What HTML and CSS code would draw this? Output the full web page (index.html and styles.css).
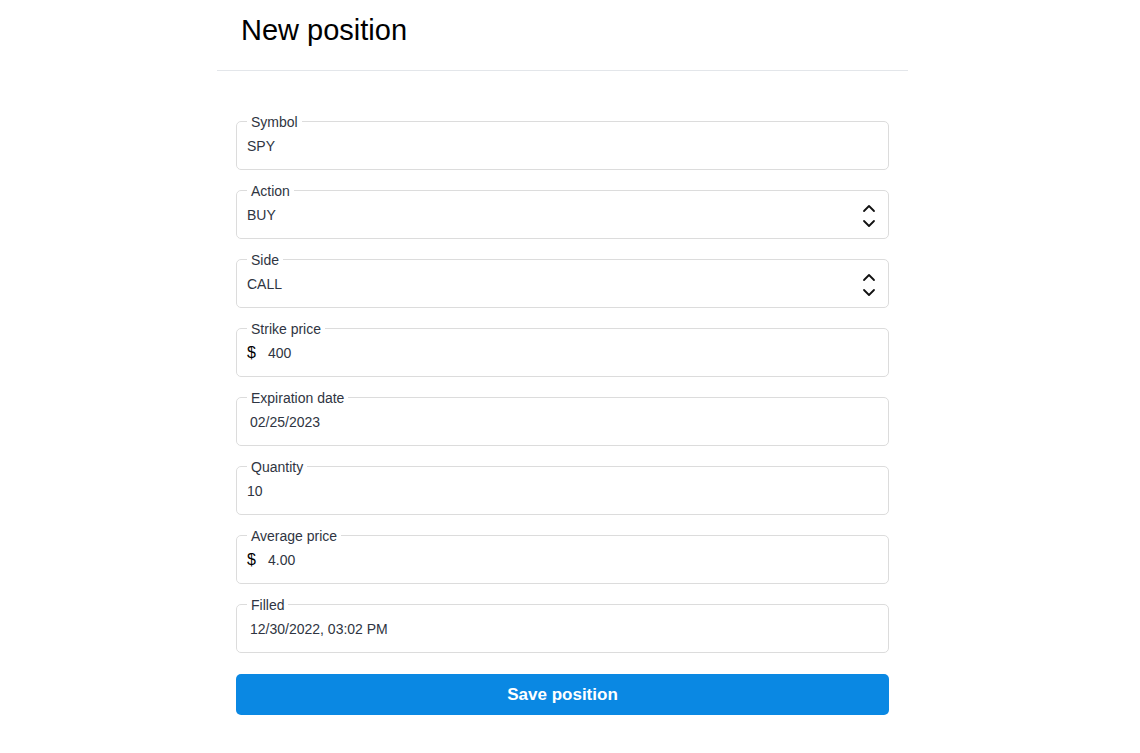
FILE: index.html
```html
<!DOCTYPE html>
<html lang="en">
<head>
<meta charset="utf-8">
<title>New position</title>
<link rel="stylesheet" href="styles.css">
</head>
<body>
<div class="page">
  <header class="header">
    <h1 class="title">New position</h1>
  </header>
  <form class="form">
    <fieldset class="field">
      <legend class="label">Symbol</legend>
      <div class="control"><span class="value">SPY</span></div>
    </fieldset>
    <fieldset class="field">
      <legend class="label">Action</legend>
      <div class="control select"><span class="value">BUY</span>
        <svg class="chev" width="14" height="26" viewBox="0 0 14 26"><path d="M2 8 L7 3 L12 8" fill="none" stroke="#111" stroke-width="1.8" stroke-linecap="round" stroke-linejoin="round"/><path d="M2 18 L7 23 L12 18" fill="none" stroke="#111" stroke-width="1.8" stroke-linecap="round" stroke-linejoin="round"/></svg>
      </div>
    </fieldset>
    <fieldset class="field">
      <legend class="label">Side</legend>
      <div class="control select"><span class="value">CALL</span>
        <svg class="chev" width="14" height="26" viewBox="0 0 14 26"><path d="M2 8 L7 3 L12 8" fill="none" stroke="#111" stroke-width="1.8" stroke-linecap="round" stroke-linejoin="round"/><path d="M2 18 L7 23 L12 18" fill="none" stroke="#111" stroke-width="1.8" stroke-linecap="round" stroke-linejoin="round"/></svg>
      </div>
    </fieldset>
    <fieldset class="field">
      <legend class="label">Strike price</legend>
      <div class="control"><span class="prefix">$</span><span class="value">400</span></div>
    </fieldset>
    <fieldset class="field">
      <legend class="label">Expiration date</legend>
      <div class="control"><span class="value date">02/25/2023</span></div>
    </fieldset>
    <fieldset class="field">
      <legend class="label">Quantity</legend>
      <div class="control"><span class="value">10</span></div>
    </fieldset>
    <fieldset class="field">
      <legend class="label">Average price</legend>
      <div class="control"><span class="prefix">$</span><span class="value">4.00</span></div>
    </fieldset>
    <fieldset class="field">
      <legend class="label">Filled</legend>
      <div class="control"><span class="value date">12/30/2022, 03:02 PM</span></div>
    </fieldset>
    <button type="button" class="save">Save position</button>
  </form>
</div>
</body>
</html>
```
FILE: styles.css
```css
* { box-sizing: border-box; }
html, body {
  margin: 0;
  padding: 0;
  background: #fff;
}
body {
  font-family: "Liberation Sans", Arial, sans-serif;
  color: #2f3542;
}
.page {
  width: 691px;
  margin-left: 217px;
}
.header {
  height: 71px;
  border-bottom: 1px solid #e3e6ea;
  padding-left: 24px;
}
.title {
  margin: 0;
  padding-top: 12px;
  font-size: 29px;
  line-height: 36px;
  font-weight: 400;
  color: #000;
}
.form {
  display: flex;
  flex-direction: column;
  gap: 12px;
  padding: 42px 19px 0;
}
.field {
  margin: 0;
  border: 1px solid #dcdcdc;
  border-radius: 5px;
  padding: 0 10px 7px;
  min-width: 0;
}
.label {
  padding: 1px 4px 0;
  font-size: 14px;
  line-height: 16px;
  color: #2f3542;
}
.control {
  height: 32px;
  display: flex;
  align-items: center;
  font-size: 14px;
  color: #2f3542;
}
.select {
  justify-content: space-between;
  padding-right: 2px;
}
.chev {
  display: block;
  margin-top: 1px;
}
.prefix {
  font-size: 16px;
  color: #000;
  width: 21px;
}
.date {
  padding-left: 3px;
}
.save {
  margin-top: 9px;
  height: 41px;
  border: none;
  border-radius: 5px;
  background: #0a88e3;
  color: #fff;
  font-family: "Liberation Sans", Arial, sans-serif;
  font-size: 17px;
  font-weight: 700;
}
```
